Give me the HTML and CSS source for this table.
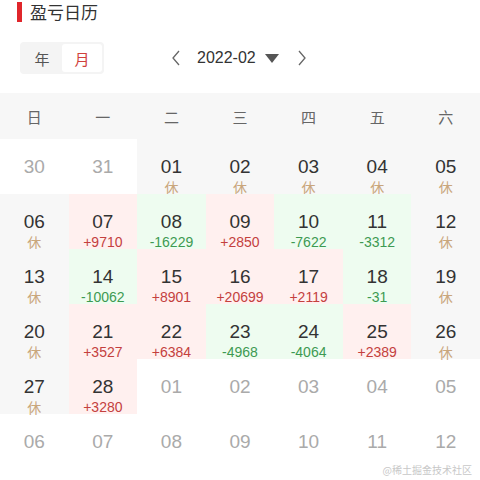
FILE: index.html
```html
<!DOCTYPE html>
<html lang="zh">
<head>
<meta charset="utf-8">
<link rel="stylesheet" href="styles.css">
</head>
<body>
<div class="page">
  <div class="title"><span class="bar"></span><span class="title-text">盈亏日历</span></div>
  <div class="toolbar">
    <div class="tabs">
      <div class="tab">年</div>
      <div class="tab active">月</div>
    </div>
    <div class="nav">
      <svg class="chev" width="10" height="16" viewBox="0 0 10 16"><polyline points="8,1 2,8 8,15" fill="none" stroke="#666" stroke-width="1.3"/></svg>
      <span class="month">2022-02</span>
      <svg class="tri" width="14" height="9" viewBox="0 0 14 9"><polygon points="0,0 14,0 7,9" fill="#555"/></svg>
      <svg class="chev right" width="10" height="16" viewBox="0 0 10 16"><polyline points="2,1 8,8 2,15" fill="none" stroke="#666" stroke-width="1.3"/></svg>
    </div>
  </div>
  <div class="cal">
    <div class="wd">日</div><div class="wd">一</div><div class="wd">二</div><div class="wd">三</div><div class="wd">四</div><div class="wd">五</div><div class="wd">六</div>

    <div class="cell other"><span class="d">30</span></div>
    <div class="cell other"><span class="d">31</span></div>
    <div class="cell rest"><span class="d">01</span><span class="s off">休</span></div>
    <div class="cell rest"><span class="d">02</span><span class="s off">休</span></div>
    <div class="cell rest"><span class="d">03</span><span class="s off">休</span></div>
    <div class="cell rest"><span class="d">04</span><span class="s off">休</span></div>
    <div class="cell rest"><span class="d">05</span><span class="s off">休</span></div>

    <div class="cell rest"><span class="d">06</span><span class="s off">休</span></div>
    <div class="cell up"><span class="d">07</span><span class="s">+9710</span></div>
    <div class="cell down"><span class="d">08</span><span class="s">-16229</span></div>
    <div class="cell up"><span class="d">09</span><span class="s">+2850</span></div>
    <div class="cell down"><span class="d">10</span><span class="s">-7622</span></div>
    <div class="cell down"><span class="d">11</span><span class="s">-3312</span></div>
    <div class="cell rest"><span class="d">12</span><span class="s off">休</span></div>

    <div class="cell rest"><span class="d">13</span><span class="s off">休</span></div>
    <div class="cell down"><span class="d">14</span><span class="s">-10062</span></div>
    <div class="cell up"><span class="d">15</span><span class="s">+8901</span></div>
    <div class="cell up"><span class="d">16</span><span class="s">+20699</span></div>
    <div class="cell up"><span class="d">17</span><span class="s">+2119</span></div>
    <div class="cell down"><span class="d">18</span><span class="s">-31</span></div>
    <div class="cell rest"><span class="d">19</span><span class="s off">休</span></div>

    <div class="cell rest"><span class="d">20</span><span class="s off">休</span></div>
    <div class="cell up"><span class="d">21</span><span class="s">+3527</span></div>
    <div class="cell up"><span class="d">22</span><span class="s">+6384</span></div>
    <div class="cell down"><span class="d">23</span><span class="s">-4968</span></div>
    <div class="cell down"><span class="d">24</span><span class="s">-4064</span></div>
    <div class="cell up"><span class="d">25</span><span class="s">+2389</span></div>
    <div class="cell rest"><span class="d">26</span><span class="s off">休</span></div>

    <div class="cell rest"><span class="d">27</span><span class="s off">休</span></div>
    <div class="cell up"><span class="d">28</span><span class="s">+3280</span></div>
    <div class="cell other"><span class="d">01</span></div>
    <div class="cell other"><span class="d">02</span></div>
    <div class="cell other"><span class="d">03</span></div>
    <div class="cell other"><span class="d">04</span></div>
    <div class="cell other"><span class="d">05</span></div>

    <div class="cell other"><span class="d">06</span></div>
    <div class="cell other"><span class="d">07</span></div>
    <div class="cell other"><span class="d">08</span></div>
    <div class="cell other"><span class="d">09</span></div>
    <div class="cell other"><span class="d">10</span></div>
    <div class="cell other"><span class="d">11</span></div>
    <div class="cell other"><span class="d">12</span></div>
  </div>
  <div class="watermark">@稀土掘金技术社区</div>
</div>
</body>
</html>
```
FILE: styles.css
```css
* { box-sizing: border-box; }
html, body { margin: 0; padding: 0; background: #fff; }
body {
  font-family: "Liberation Sans", "Noto Sans CJK SC", sans-serif;
  color: #333;
  width: 480px;
  height: 480px;
  overflow: hidden;
}
.page { position: relative; width: 480px; height: 480px; }

.title {
  display: flex;
  align-items: center;
  height: 22px;
  padding-left: 17px;
  padding-top: 1px;
}
.bar {
  width: 5px;
  height: 20px;
  background: #e0262b;
  margin-right: 8px;
}
.title-text {
  font-size: 17px;
  line-height: 20px;
  color: #333;
  font-family: "Noto Sans CJK SC", sans-serif;
}

.toolbar {
  display: flex;
  align-items: center;
  margin-top: 19px;
  height: 34px;
  padding-left: 20px;
}
.tabs {
  display: flex;
  background: #f4f4f4;
  border-radius: 4px;
  padding: 2px;
  height: 32px;
}
.tab {
  width: 40px;
  height: 28px;
  display: flex;
  align-items: center;
  justify-content: center;
  font-size: 15px;
  font-family: "Noto Sans CJK SC", sans-serif;
  color: #555;
  border-radius: 3px;
}
.tab.active { background: #fff; color: #d0413c; }

.nav {
  display: flex;
  align-items: center;
  margin-left: 67px;
}
.chev { display: block; }
.month {
  font-size: 16px;
  color: #333;
  margin-left: 16px;
  margin-right: 9px;
}
.tri { display: block; }
.chev.right { margin-left: 18px; }

.cal {
  margin-top: 18px;
  display: grid;
  grid-template-columns: repeat(7, 1fr);
  grid-template-rows: 46px repeat(6, 55px);
}
.wd {
  background: #f7f7f7;
  display: flex;
  align-items: center;
  justify-content: center;
  font-size: 15px;
  font-family: "Noto Sans CJK SC", sans-serif;
  color: #666;
}
.cell {
  display: flex;
  flex-direction: column;
  align-items: center;
  padding-top: 17px;
}
.cell.rest { background: #f7f7f7; }
.cell.up { background: #fff0ef; }
.cell.down { background: #eefcf0; }
.d {
  font-size: 19px;
  line-height: 22px;
  color: #333;
}
.cell.other .d { color: #aaa; }
.s {
  font-size: 14px;
  line-height: 16px;
  margin-top: 1px;
}
.up .s { color: #c4403e; }
.down .s { color: #3d9a52; }
.s.off {
  color: #c9a67c;
  font-family: "Noto Sans CJK SC", sans-serif;
  font-size: 14px;
}

.watermark {
  position: absolute;
  right: 8px;
  bottom: 4px;
  font-size: 10px;
  line-height: 12px;
  color: #c8c8c8;
  font-family: "Noto Sans CJK SC", sans-serif;
}
```
